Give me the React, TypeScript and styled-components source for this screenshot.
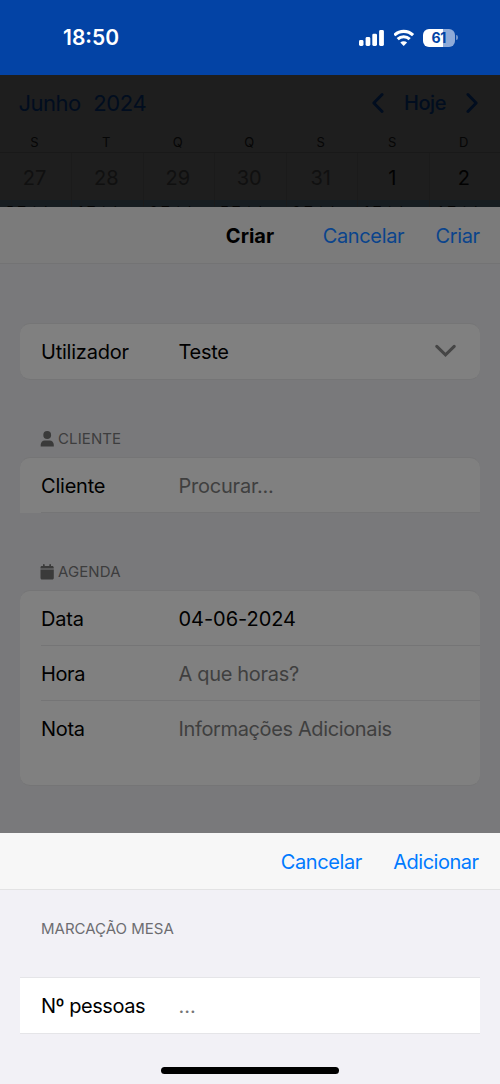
import React from "react";
import styled, { createGlobalStyle } from "styled-components";

const Global = createGlobalStyle`
  * { box-sizing: border-box; }
  body { margin: 0; background: #f2f1f6; font-family: Inter, "Liberation Sans", sans-serif; font-size: 20px; line-height: 24px; color: #000; }
`;

const Screen = styled.div`
  width: 500px;
  height: 1084px;
  display: flex;
  flex-direction: column;
  overflow: hidden;
`;

const Label = styled.span<{ $track?: number; $size?: number; $weight?: number; $color?: string }>`
  display: block;
  white-space: nowrap;
  letter-spacing: ${(p) => p.$track ?? 0}px;
  margin-right: ${(p) => -(p.$track ?? 0)}px;
  font-size: ${(p) => p.$size ?? 20}px;
  font-weight: ${(p) => p.$weight ?? 400};
  color: ${(p) => p.$color ?? "inherit"};
`;

const StatusBar = styled.header`
  height: 75px;
  flex: none;
  display: flex;
  justify-content: space-between;
  align-items: center;
  padding: 0 42px 0 63px;
  background: #0343a5;
  color: #fff;
`;

const StatusIcons = styled.div`
  display: flex;
  align-items: center;
  gap: 8.5px;
  height: 18px;
`;

const Battery = styled.div`
  display: flex;
  align-items: center;
  gap: 1px;
`;
const Cell = styled.div`
  width: 32px;
  height: 18px;
  border-radius: 6px;
  display: flex;
  align-items: center;
  justify-content: center;
  background: linear-gradient(90deg, #fff 61%, #8eaad8 61%);
  color: #0343a5;
`;
const Nub = styled.div`
  width: 2px;
  height: 5px;
  border-radius: 0 2px 2px 0;
  background: #6f93cb;
`;

const Calendar = styled.section`
  height: 132px;
  flex: none;
  overflow: hidden;
  background: #1e1e1e;
  color: #010d1f;
`;
const MonthBar = styled.div`
  height: 56px;
  display: flex;
  align-items: center;
  justify-content: space-between;
  padding: 0 22px 0 18.5px;
`;
const MonthGroup = styled.div<{ $gap: number }>`
  display: flex;
  align-items: center;
  gap: ${(p) => p.$gap}px;
`;
const Week = styled.div`
  display: grid;
  grid-template-columns: 72px repeat(6, 71.5px);
`;
const Weekday = styled.div`
  height: 22px;
  display: flex;
  align-items: center;
  justify-content: center;
  padding-right: 3px;
  font-size: 13px;
  color: #060606;
  border-bottom: 1px solid #191919;
`;
const Day = styled.div<{ $current: boolean }>`
  height: 47px;
  display: flex;
  align-items: center;
  justify-content: center;
  padding: 2px 2px 0 0;
  border-right: 1px solid #1b1b1b;
  color: ${(p) => (p.$current ? "#020202" : "#101010")};
`;
const DayEvent = styled.div`
  height: 20px;
  padding: 3px 0 0 6px;
  border-right: 1px solid #1b1b1b;
  background: #171d21;
  color: #020202;
  font-size: 13px;
  line-height: 16px;
  white-space: nowrap;
  overflow: hidden;
`;

const Sheet = styled.main`
  height: 626px;
  flex: none;
  background: #79797b;
  overflow: hidden;
`;
const SheetBar = styled.div`
  height: 57px;
  display: grid;
  grid-template-columns: 1fr auto 1fr;
  align-items: center;
  padding: 1px 20px 0 20px;
  background: #7b7b7b;
  border-bottom: 1px solid #737374;
`;
const Actions = styled.div<{ $gap: number }>`
  grid-column: 3;
  display: flex;
  justify-content: flex-end;
  gap: ${(p) => p.$gap}px;
`;
const Title = styled.h1`
  grid-column: 2;
  margin: 0;
  line-height: 24px;
`;

const Form = styled.div`
  padding: 59px 20px 0;
`;
const SectionTitle = styled.h2`
  height: 77px;
  margin: 0;
  padding: 0 20px 6px;
  display: flex;
  align-items: flex-end;
  gap: 4px;
  color: #3d3d3e;
  font-weight: 400;
  line-height: 24px;
  svg { margin-bottom: 4px; }
`;
const Card = styled.div<{ $open?: boolean }>`
  background: #808080;
  border: solid #757576;
  border-width: 1px 0;
  border-radius: ${(p) => (p.$open ? "10px 10px 0 0" : "10px")};
  border-bottom-width: ${(p) => (p.$open ? 0 : 1)}px;
  padding-left: 21px;
`;
const Row = styled.div<{ $height?: number; $line?: boolean }>`
  height: ${(p) => p.$height ?? 55}px;
  display: grid;
  grid-template-columns: 137.5px 1fr auto;
  align-items: start;
  padding: 16px 24px 0 0;
  border-bottom: ${(p) => (p.$line ? "1px solid #757576" : "none")};
`;

const BottomSheet = styled.section`
  flex: 1;
  background: #f2f1f6;
`;
const BottomBar = styled(SheetBar)`
  padding-right: 21px;
  background: #f7f7f7;
  border-color: #e3e3e4;
`;
const GroupTitle = styled.h2`
  height: 87px;
  margin: 0;
  padding: 27px 0 0 41px;
  color: #6d6d71;
  font-weight: 400;
  line-height: 24px;
`;
const InsetRow = styled(Row)`
  height: 57px;
  margin: 0 20px;
  padding-left: 21px;
  background: #fff;
  border: solid #e5e5e8;
  border-width: 1px 0;
`;
const HomeIndicator = styled.div`
  width: 178px;
  height: 7px;
  margin: 33px auto 0;
  border-radius: 4px;
  background: #000;
`;

const Signal = () => (
  <svg width="26" height="18" viewBox="0 0 26 18" fill="#fff">
    <rect x="0" y="11" width="4.5" height="6" rx="1.4" />
    <rect x="6.6" y="8" width="4.7" height="9" rx="1.4" />
    <rect x="13.3" y="4.7" width="4.7" height="12.3" rx="1.4" />
    <rect x="20.1" y="1" width="4.8" height="16" rx="1.4" />
  </svg>
);
const Wifi = () => (
  <svg width="21" height="18" viewBox="0.8 0 21 18" fill="none" stroke="#fff" strokeWidth="3.1">
    <path d="M1.1 6.2a13.5 13.5 0 0 1 18.8 0" />
    <path d="M4.5 10.2a8.7 8.7 0 0 1 12 0" />
    <path d="M10.5 17 7.1 13.6a4.8 4.8 0 0 1 6.8 0z" fill="#fff" stroke="none" />
  </svg>
);
const Chevron = ({ flip = false }: { flip?: boolean }) => (
  <svg width="12" height="20" viewBox="0 0 12 20" fill="none" stroke="#010d1f" strokeWidth="2.8" strokeLinecap="round" strokeLinejoin="round">
    <path d={flip ? "M1.9 1.5 10.2 10 1.9 18.5" : "M10.1 1.5 1.8 10l8.3 8.5"} />
  </svg>
);
const Down = () => (
  <svg width="21" height="13" viewBox="0 0 21 13" fill="none" stroke="#454545" strokeWidth="3" strokeLinecap="round" style={{ marginTop: 4 }}>
    <path d="M1.8 2.4 10.5 10.9 19.2 2.4" />
  </svg>
);
const Person = () => (
  <svg width="14" height="16" viewBox="0 0 14 16" fill="#3a3a3a">
    <circle cx="7.2" cy="4" r="3.9" />
    <path d="M0.7 15.4v-1.6C0.7 11.3 2.4 9.4 4.8 9.4h4.8c2.4 0 4.2 1.9 4.2 4.4v1.6z" />
  </svg>
);
const CalendarIcon = () => (
  <svg width="14" height="16" viewBox="0 0 14 16" fill="#3a3a3a">
    <path d="M3 .7c0-.9 1.7-.9 1.7 0V2h4.6V.7c0-.9 1.7-.9 1.7 0V2h1.2c.8 0 1.5.6 1.5 1.4v1.2H.5V3.4C.5 2.6 1.1 2 1.9 2H3z" />
    <path d="M.5 5.5h13.3v8.6c0 .9-.6 1.5-1.5 1.5H2c-.9 0-1.5-.6-1.5-1.5z" />
  </svg>
);

const weekdays = ["S", "T", "Q", "Q", "S", "S", "D"];
const days = [
  { day: 27, total: 5 },
  { day: 28, total: 1 },
  { day: 29, total: 6 },
  { day: 30, total: 7 },
  { day: 31, total: 8 },
  { day: 1, total: 1 },
  { day: 2, total: 4 },
];
const PLACE = "#3f3f3f";

export default function App() {
  return (
    <Screen>
      <Global />
      <StatusBar>
        <Label $weight={600} $size={21}>18:50</Label>
        <StatusIcons>
          <Signal />
          <Wifi />
          <Battery>
            <Cell><Label $size={14} $weight={700} $track={-0.3}>61</Label></Cell>
            <Nub />
          </Battery>
        </StatusIcons>
      </StatusBar>
      <Calendar>
        <MonthBar>
          <MonthGroup $gap={12}>
            <Label $size={22} $track={-0.5}>Junho</Label>
            <Label $size={22} $track={-0.4}>2024</Label>
          </MonthGroup>
          <MonthGroup $gap={19.5}>
            <Chevron />
            <Label $weight={500} $track={-0.4}>Hoje</Label>
            <Chevron flip />
          </MonthGroup>
        </MonthBar>
        <Week>
          {weekdays.map((d, i) => <Weekday key={i}>{d}</Weekday>)}
          {days.map(({ day }) => <Day key={day} $current={day < 3}>{day}</Day>)}
          {days.map(({ day, total }) => <DayEvent key={day}>{total} Total</DayEvent>)}
        </Week>
      </Calendar>
      <Sheet>
        <SheetBar>
          <Title><Label $weight={700}>Criar</Label></Title>
          <Actions $gap={31}>
            <Label $color="#0a448c" $track={-0.35}>Cancelar</Label>
            <Label $color="#0a448c" $track={-0.4}>Criar</Label>
          </Actions>
        </SheetBar>
        <Form>
          <Card>
            <Row $height={55}>
              <Label $track={-0.22}>Utilizador</Label>
              <Label $track={-0.3}>Teste</Label>
              <Down />
            </Row>
          </Card>
          <SectionTitle><Person /><Label $size={15} $track={0.1}>CLIENTE</Label></SectionTitle>
          <Card $open>
            <Row $line>
              <Label $track={-0.22}>Cliente</Label>
              <Label $color={PLACE} $track={-0.22}>Procurar...</Label>
            </Row>
          </Card>
          <SectionTitle><CalendarIcon /><Label $size={15} $track={0.1}>AGENDA</Label></SectionTitle>
          <Card>
            <Row $line>
              <Label $track={-0.22}>Data</Label>
              <Label $track={-0.05}>04-06-2024</Label>
            </Row>
            <Row $line>
              <Label $track={-0.4}>Hora</Label>
              <Label $color={PLACE} $track={-0.32}>A que horas?</Label>
            </Row>
            <Row $height={84}>
              <Label $track={-0.3}>Nota</Label>
              <Label $color={PLACE} $track={-0.37}>Informações Adicionais</Label>
            </Row>
          </Card>
        </Form>
      </Sheet>
      <BottomSheet>
        <BottomBar>
          <Actions $gap={31}>
            <Label $color="#007aff" $track={-0.4}>Cancelar</Label>
            <Label $color="#007aff" $track={-0.5}>Adicionar</Label>
          </Actions>
        </BottomBar>
        <GroupTitle><Label $size={15}>MARCAÇÃO MESA</Label></GroupTitle>
        <InsetRow>
          <Label $track={-0.47}>Nº pessoas</Label>
          <Label $color="#757575">...</Label>
        </InsetRow>
        <HomeIndicator />
      </BottomSheet>
    </Screen>
  );
}
